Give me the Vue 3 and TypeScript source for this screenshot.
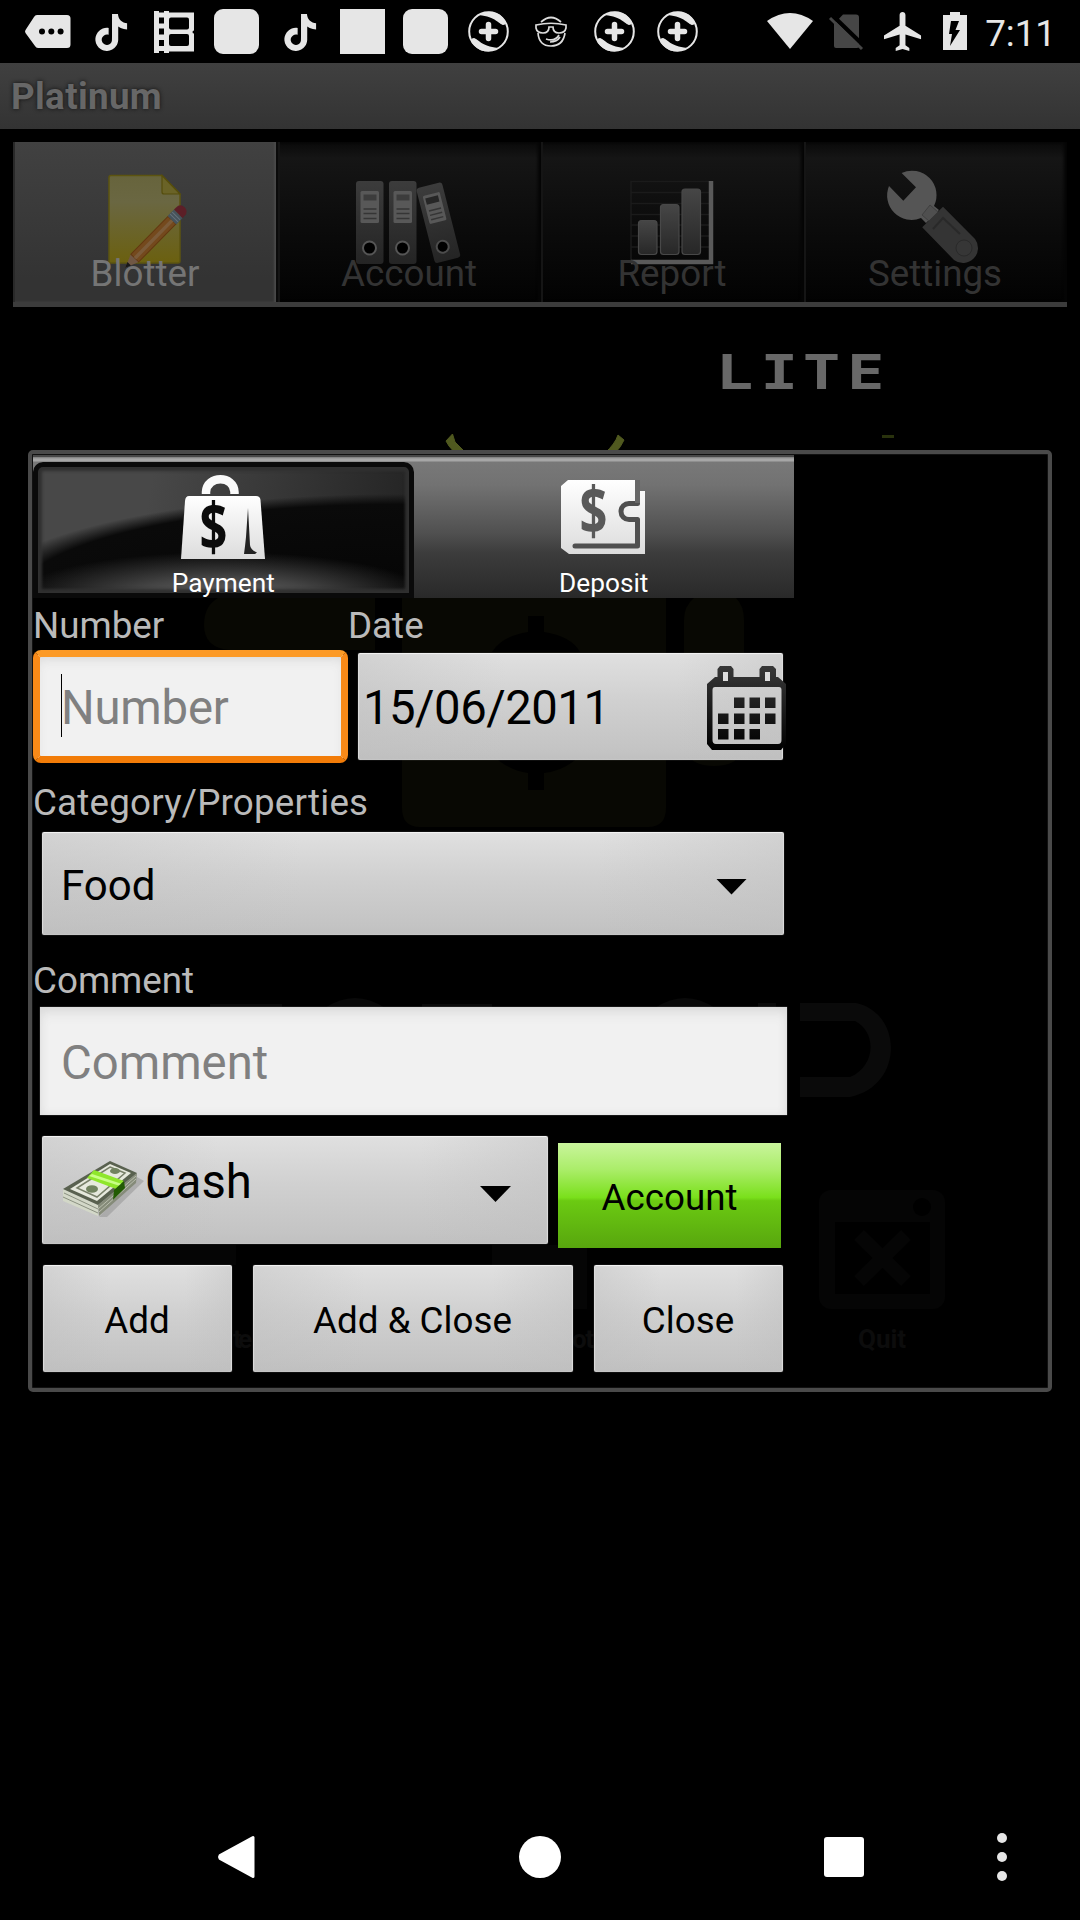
<script setup lang="ts">
type TabId = 'blotter' | 'account' | 'report' | 'settings'

interface Tab {
  id: TabId
  label: string
}

const notifications: string[] = [
  'message', 'tiktok', 'film', 'rounded', 'tiktok', 'square',
  'rounded', 'plus', 'face', 'plus', 'plus',
]

const tabs: Tab[] = [
  { id: 'blotter', label: 'Blotter' },
  { id: 'account', label: 'Account' },
  { id: 'report', label: 'Report' },
  { id: 'settings', label: 'Settings' },
]

const activeTab: TabId = 'blotter'

const calendarCells: [number, number][] = [
  [27, 31.5], [42.5, 31.5], [58, 31.5],
  [11, 47.5], [27, 47.5], [42.5, 47.5], [58, 47.5],
  [11, 63], [27, 63], [42.5, 63],
]
</script>

<template>
  <div class="screen">
    <header class="status">
      <div class="notes">
        <svg v-for="(n, i) in notifications" :key="i" width="63" height="63" viewBox="0 0 63 63" fill="#e6e6e6">
          <template v-if="n === 'message'">
            <path d="M20 15H51q3.500 0 3.500 3.500V44.500q0 3.500 -3.500 3.500H22q-2 0-3-2L9.500 33q-1-1.500 0-3L18 17q1-2 3-2z" />
            <g fill="#000"><circle cx="26" cy="31.500" r="3" /><circle cx="35.300" cy="31.500" r="3" /><circle cx="44.600" cy="31.500" r="3" /></g>
          </template>
          <path
            v-else-if="n === 'tiktok'"
            transform="translate(14 14) scale(1.52 1.54)"
            d="M12.525.02c1.31-.02 2.61-.01 3.91-.02.08 1.530.63 3.090 1.750 4.170 1.120 1.110 2.700 1.620 4.240 1.790v4.030c-1.440-.05-2.890-.35-4.200-.97-.57-.26-1.100-.59-1.620-.93-.01 2.920.01 5.840-.02 8.750-.08 1.400-.54 2.790-1.350 3.940-1.310 1.920-3.580 3.170-5.910 3.210-1.430.08-2.860-.31-4.080-1.030-2.020-1.190-3.440-3.370-3.650-5.710-.02-.5-.03-1-.01-1.490.18-1.900 1.120-3.720 2.580-4.960 1.660-1.440 3.980-2.130 6.150-1.720.02 1.480-.04 2.960-.04 4.440-.99-.32-2.150-.23-3.020.37-.63.41-1.110 1.040-1.360 1.750-.21.51-.15 1.070-.14 1.610.24 1.640 1.820 3.020 3.500 2.870 1.120-.01 2.190-.66 2.770-1.610.19-.33.4-.67.41-1.060.1-1.790.06-3.570.07-5.360.01-4.030-.01-8.050.02-12.070z"
          />
          <g v-else-if="n === 'film'">
            <path d="M12 11h40v42H12z" />
            <g fill="#000">
              <path d="M17 11h5v1.500h-5zM17 17.500h5v6h-5zM17 28.500h5v6h-5zM17 40h5v6h-5zM17 51h5v2h-5zM27 11h25v1.500H27zM27 51.500h25V53H27z" />
              <rect x="27" y="17.500" width="20" height="12" rx="2" />
              <rect x="27" y="34" width="20" height="12" rx="2" />
              <circle cx="52" cy="32" r="1.500" />
            </g>
          </g>
          <rect v-else-if="n === 'rounded'" x="9" y="9" width="45" height="45" rx="9" />
          <rect v-else-if="n === 'square'" x="9" y="9" width="45" height="45" />
          <g v-else-if="n === 'plus'">
            <circle cx="31.500" cy="31.500" r="19.300" fill="none" stroke="#e6e6e6" stroke-width="2" />
            <path d="M22 15C31 9 43 11 49 22Q49 25 46 25C42 24 39 17 22 15z" />
            <path d="M41 48C32 54 20 52 14 41Q14 38 17 38C21 39 24 46 41 48z" />
            <path d="M31.500 24.500v14M24.500 31.500h14" stroke="#e6e6e6" stroke-width="5.500" stroke-linecap="round" />
          </g>
          <g v-else fill="none" stroke="#dcdcdc" stroke-width="1.700">
            <path d="M21 22Q31 13 41 22M18 33q1 13 13 13t14-13" />
            <path d="M16 25q15-3.500 30 0v3q-1 5-7 5t-6-6h-4q0 6-6 6t-7-5z" />
            <path d="M26 39q9 3 13-4M30 42q7 0 10-5" />
          </g>
        </svg>
      </div>
      <div class="system">
        <svg width="46" height="63" viewBox="0 0 46 63"><path d="M0 21Q23 5 46 21L23 49z" fill="#e6e6e6" /></svg>
        <svg class="sim" width="36" height="63" viewBox="0 0 36 63">
          <path d="M14 14.500h13q3 0 3 3V46q0 2-2 2H7q-2 0-2-2V24z" fill="#464646" />
          <path d="M3 15L36 47" stroke="#000" stroke-width="4.500" />
          <path d="M1 18L33 49" stroke="#464646" stroke-width="3" />
        </svg>
        <svg class="plane" width="37" height="63" viewBox="0 0 37 63">
          <path transform="translate(-3.900 8.100) scale(1.950)" fill="#e6e6e6" d="M21 16v-2l-8-5V3.500c0-.83-.67-1.500-1.500-1.500S10 2.670 10 3.500V9l-8 5v2l8-2.500V19l-2 1.500V22l3.500-1 3.500 1v-1.500L13 19v-5.500l8 2.500z" />
        </svg>
        <svg class="battery" width="24" height="63" viewBox="0 0 24 63">
          <path d="M7 12h10v3h7v35H0V15h7z" fill="#e6e6e6" />
          <path d="M8 21h8l-3.500 9H17L7 46l2-12H6z" fill="#000" />
        </svg>
        <span class="clock">7:11</span>
      </div>
    </header>

    <div class="title">Platinum</div>

    <nav class="tabs">
      <div v-for="t in tabs" :key="t.id" class="tab" :class="{ active: t.id === activeTab }">
        <svg width="120" height="110" viewBox="0 0 120 110">
          <defs>
            <linearGradient id="paper" x1="0" y1="0" x2="0" y2="1">
              <stop offset="0" stop-color="#67643c" /><stop offset=".3" stop-color="#6a6742" /><stop offset="1" stop-color="#6b600f" />
            </linearGradient>
            <linearGradient id="binder" x1="0" y1="0" x2="0" y2="1">
              <stop offset="0" stop-color="#3c3c3c" /><stop offset="1" stop-color="#242424" />
            </linearGradient>
            <linearGradient id="bar" x1="0" y1="0" x2="0" y2="1">
              <stop offset="0" stop-color="#464646" /><stop offset="1" stop-color="#272727" />
            </linearGradient>
          </defs>
          <g v-if="t.id === 'blotter'">
            <path d="M26 15.500H77L95 34V101q0 2-2 2H26q-2 0-2-2V17.500q0-2 2-2z" fill="url(#paper)" stroke="#5c5410" stroke-width="1.500" />
            <path d="M77 15.500L95 34H79q-2 0-2-2z" fill="#6a6327" stroke="#554d0c" stroke-width="1.200" />
            <g transform="translate(40 108) rotate(-45.500)">
              <path d="M0 0L15-6V6z" fill="#705744" /><path d="M0 0L6-2.500V2.500z" fill="#181818" />
              <path d="M14-5.500H67V5.500H14z" fill="#74491d" stroke="#633710" /><path d="M14-1.500H67V2H14z" fill="#7b5b39" />
              <path d="M67-6h9v12h-9z" fill="#46535b" /><path d="M70-5.500v11M73-5.500v11" stroke="#65727a" />
              <path d="M76-6h3q6 0 6 6t-6 6h-3z" fill="#5c1f27" />
            </g>
          </g>
          <g v-else-if="t.id === 'account'">
            <g v-for="x in [7, 40]" :key="x" :transform="`translate(${x} 21)`">
              <rect width="27.500" height="83" rx="3" fill="url(#binder)" />
              <rect x="4.500" y="10" width="18.500" height="32" rx="1.500" fill="#585858" />
              <rect x="7.500" y="13.500" width="13" height="6" fill="#3c3c3c" />
              <path d="M7.500 28h13M7.500 32.500h13M7.500 37.500h13" stroke="#353535" stroke-width="1.500" />
              <circle cx="13.500" cy="67" r="6.500" fill="#000" stroke="#555" stroke-width="2" />
            </g>
            <g transform="translate(67 28.500) rotate(-14.300)">
              <rect width="26.500" height="77.500" rx="3" fill="url(#binder)" />
              <rect x="4.500" y="9" width="17.500" height="29" rx="1.500" fill="#585858" />
              <rect x="6.500" y="12" width="13" height="6.500" fill="#262626" />
              <path d="M7 25h12.500M7 29.500h12.500M7 34h12.500" stroke="#353535" stroke-width="1.500" />
              <circle cx="11.500" cy="63" r="6" fill="#000" stroke="#4c4c4c" stroke-width="2" />
            </g>
          </g>
          <g v-else-if="t.id === 'report'">
            <path d="M19 100V21.500H97M19 32.500H97M19 43.500H97M19 54.500H97M19 65H97M19 76H97M19 87H97" fill="none" stroke="#1b1b1b" stroke-width="1.500" />
            <path d="M99 21V102H19" fill="none" stroke="#5a5a5a" stroke-width="4.500" />
            <g fill="url(#bar)" stroke="#484848" stroke-width="1.200">
              <rect x="26.500" y="60.500" width="18.500" height="34" rx="3" />
              <rect x="48.500" y="44.500" width="18.500" height="50" rx="3" />
              <rect x="70" y="29" width="18.500" height="65.500" rx="3" />
            </g>
          </g>
          <g v-else>
            <path d="M26.600 13A24.500 24.500 0 0 1 59 46L64 50L51 63L46 58A24.500 24.500 0 0 1 14 26L28.300 40.700L41 27.300z" fill="#555" />
            <path d="M55 45l8 7-9 9-7-6z" fill="#4f4f4f" stroke="#404040" />
            <path d="M68 46.700L100 79A15 15 0 0 1 79 100L47.200 67.300z" fill="#343434" />
            <path d="M58 69L68 58L85 74" fill="none" stroke="#292929" stroke-width="2" />
            <circle cx="89" cy="88" r="8" fill="#363636" stroke="#2a2a2a" />
          </g>
        </svg>
        <span>{{ t.label }}</span>
      </div>
    </nav>
    <div class="tabline"></div>

    <svg class="wallpaper" width="1080" height="1480" viewBox="0 320 1080 1480">
      <g transform="translate(0 389) scale(1.3 1)">
        <text x="550.500 585 617.500 651.500" y="0" font-family="DejaVu Sans Mono, monospace" font-weight="700" font-size="48" fill="#686868">LITE</text>
      </g>
      <path d="M446 441L452.500 434L455 442L466 453H455L449 446z" fill="#50591f" stroke="#50591f" />
      <path d="M624 440L618 435Q615 444 605 453H615Q621 447 624 440z" fill="#50591f" stroke="#50591f" />
      <path d="M882 435h12v3h-12z" fill="#29320d" />
      <g fill="#080803">
        <path d="M230 598H375V650H230Q204 648 204 625Q204 606 218 598z" />
        <path d="M402 598H666V808Q666 827 648 827H420Q402 827 402 808z" />
        <path d="M694 598H736Q744 606 744 620V740Q744 766 714 766T684 740V620Q684 606 694 598z" />
      </g>
      <path d="M528 616h16v16q27 4 36 20h-88q10-16 36-20z" fill="#000" />
      <path d="M498 760Q512 771 528 773V790H544V773Q562 771 575 760z" fill="#000" />
      <g fill="#0a0a0a">
        <path d="M800 1003H856C903 1013 904 1086 850 1097H800V1077H850C876 1066 877 1032 855 1021H800z" />
        <path d="M210 1004h72v5h-72zM325 1008q30-20 60 0zM655 1008q30-20 60 0zM422 1004h70v5h-70zM758 1003h18v5h-18z" />
      </g>
      <g fill="#050505">
        <path d="M150 1245h86v20h-86zM492 1245h95v64h-95z" />
        <rect x="819" y="1190" width="126" height="119" rx="12" />
      </g>
      <rect x="835" y="1222" width="95" height="72" fill="#000" /><ellipse cx="922" cy="1207" rx="9" ry="9" fill="#000" />
      <path d="M859 1235L906 1281M906 1235L859 1281" stroke="#050505" stroke-width="14" />
      <g fill="#0c0c0c" font-family="Roboto, sans-serif" font-weight="700" font-size="26">
        <text x="858" y="1347.500">Quit</text>
        <text x="233" y="1347.500" textLength="19">te</text>
        <text x="572" y="1347.500" textLength="22">ot</text>
      </g>
    </svg>

    <main class="dialog">
      <div class="kinds">
        <div class="kind selected">
          <svg class="bag" width="84" height="84" viewBox="0 0 84 84">
            <defs>
              <linearGradient id="white" x1="0" y1="0" x2="0" y2="1">
                <stop offset="0" stop-color="#fff" /><stop offset="1" stop-color="#dcdcdc" />
              </linearGradient>
            </defs>
            <path d="M25 19V17C26 0 53 0 53.500 17V19" fill="none" stroke="#fafafa" stroke-width="8.500" />
            <path d="M8 21H75q4 0 4.500 4L84 84H0L4 26q.5-5 4-5z" fill="url(#white)" />
            <path d="M67 33L69 70Q69.500 75 76 77.500L74 79H63Q64 72 65 62z" fill="#222" />
            <text transform="translate(18.500 75.500) scale(.74 1)" font-family="Open Sans, sans-serif" font-weight="700" font-size="66" fill="#0b0b0b">$</text>
          </svg>
          <span>Payment</span>
        </div>
        <div class="kind">
          <svg class="wallet" width="84" height="74" viewBox="0 0 84 74">
            <path d="M7 0H74V11H84V74H8L0 68V6z" fill="url(#white)" />
            <path d="M76.500 8V23.500H68a8 8 0 0 0 0 16H76.500V66H14" fill="none" stroke="#505050" stroke-width="5" stroke-linejoin="round" stroke-linecap="round" />
            <path d="M74 0h5v23h-5z" fill="#686868" />
            <text transform="translate(18.500 55) scale(.74 1)" font-family="Open Sans, sans-serif" font-weight="700" font-size="66" fill="#595959">$</text>
          </svg>
          <span>Deposit</span>
        </div>
      </div>

      <div class="labels">
        <span class="caption number-caption">Number</span>
        <span class="caption">Date</span>
      </div>
      <div class="row">
        <div class="edit focused"><i class="caret"></i>Number</div>
        <div class="button date">
          <span>15/06/2011</span>
          <svg width="79" height="84" viewBox="0 0 79 84">
            <defs>
              <linearGradient id="ink" x1="0" y1="0" x2="0" y2="84" gradientUnits="userSpaceOnUse">
                <stop offset="0" stop-color="#383838" /><stop offset="1" stop-color="#000" />
              </linearGradient>
            </defs>
            <path fill="url(#ink)" fill-rule="evenodd" d="M8 11H71L79 18V78L74 84H5L0 78V18zM8 21Q5.500 21 5.500 24V74Q5.500 78 9 78H71Q74.500 78 74.500 74V24Q74.500 21 72 21z" />
            <path fill="url(#ink)" d="M13 0H24L26.500 3V15H10.500V3zM55 0H66L69 3V15H52.500V3z" />
            <path d="M16 6h5v9h-5zM58 6h5v9h-5z" fill="#ddd" />
            <rect v-for="([x, y], i) in calendarCells" :key="i" :x="x" :y="y" width="10.500" height="10.500" fill="url(#ink)" />
          </svg>
        </div>
      </div>

      <span class="caption category-caption">Category/Properties</span>
      <div class="button spinner category">
        <span>Food</span>
        <i class="arrow"></i>
      </div>

      <span class="caption comment-caption">Comment</span>
      <div class="edit comment">Comment</div>

      <div class="row account-row">
        <div class="button spinner cash">
          <svg width="86" height="60" viewBox="0 0 86 60">
            <path d="M38 57L76 17L83 21L46 57z" fill="#8a8a8a" opacity=".45" />
            <path d="M2 29L37 45V56L2 41z" fill="#d3d8c8" /><path d="M3 33l34 16M2 37l35 16" stroke="#8a9080" stroke-width="1" />
            <path d="M37 45L76 13L75 23L38 56z" fill="#858b79" /><path d="M38 52L75 19M37 49l38-33" stroke="#b9bead" />
            <path d="M49 1L76 13L37 45L2 29z" fill="#59614f" />
            <path d="M49 4L70 13L36 41L9 29z" fill="#e6e9dd" />
            <path d="M49 7L64 13L36 37L16 28z" fill="none" stroke="#788069" stroke-width="1.500" />
            <ellipse cx="31" cy="29" rx="6" ry="3.800" fill="#71835f" /><ellipse cx="54" cy="11" rx="5" ry="3" fill="#71835f" />
            <path d="M33 10L63 21L55 29L26 18z" fill="#8fe62b" /><path d="M31 14L61 24L59 26L28 16z" fill="#c8ff86" />
            <path d="M63 21L64 28L52 40L53 30z" fill="#225b03" />
          </svg>
          <span>Cash</span>
          <i class="arrow"></i>
        </div>
        <div class="green">Account</div>
      </div>

      <div class="row actions">
        <div class="button side">Add</div>
        <div class="button wide">Add &amp; Close</div>
        <div class="button side">Close</div>
      </div>
    </main>

    <footer class="navbar">
      <svg width="38" height="42" viewBox="0 0 38 42"><path d="M35 1.500V40.500L2 22.500Q1 21 2 19.500z" fill="#fff" stroke="#fff" stroke-width="3" stroke-linejoin="round" /></svg>
      <i class="home"></i>
      <i class="recent"></i>
      <div class="more"><i></i><i></i><i></i></div>
    </footer>
  </div>
</template>

<style>
body { background: #000; }
</style>

<style scoped>
.screen {
  position: relative;
  display: flex;
  flex-direction: column;
  width: 1080px;
  height: 1920px;
  overflow: hidden;
  background: #000;
  font-family: Roboto, sans-serif;
  font-size: 36.75px;
  line-height: 49px;
}
svg { display: block; flex: none; overflow: visible; }
.status {
  display: flex;
  justify-content: space-between;
  height: 63px;
  padding: 0 24px 0 16px;
}
.notes, .system { display: flex; }
.sim { margin-left: 16px; }
.plane { margin-left: 19px; }
.battery { margin-left: 22px; }
.clock {
  margin-left: 18px;
  padding-top: 9px;
  color: #e6e6e6;
}
.title {
  height: 66px;
  box-sizing: border-box;
  padding: 9px 11px 0;
  background: linear-gradient(#404040, #333);
  color: #676767;
  font-weight: 700;
  letter-spacing: .35px;
  text-shadow: 0 0 4px #111;
}
.tabs {
  display: flex;
  height: 160px;
  margin: 13px 13px 0;
}
.tab {
  display: flex;
  flex: 1;
  flex-direction: column;
  align-items: center;
  box-sizing: border-box;
  padding: 18px 1px 0 0;
  background: linear-gradient(#090909, #151515 10%, #0c0c0c 50%, #020202);
  box-shadow: inset 2px 0 0 #151515, inset -3px 0 3px #050505;
  color: #333;
}
.tab.active {
  padding: 18px 0 0 1px;
  border-right: 2px solid #0a0a0a;
  background: linear-gradient(#414141, #333 85%, #333);
  box-shadow: inset 2px 0 0 #292929, inset -2px 0 2px #4a4a4a;
  color: #757575;
}
.tab span { margin-top: -21px; }
.tabline {
  height: 5px;
  margin: 0 13px;
  background: #3c3c3c;
}
.wallpaper { position: absolute; top: 320px; left: 0; }
.dialog {
  position: absolute;
  top: 450px;
  left: 28px;
  display: flex;
  flex-direction: column;
  box-sizing: border-box;
  width: 1024px;
  height: 942px;
  padding: 1px;
  border: 4px solid #4a4a4a;
  border-radius: 5px;
  box-shadow: inset 0 0 0 1px #111;
}
.kinds {
  position: relative;
  display: flex;
  width: 761px;
  height: 143px;
  background: linear-gradient(#484848 0 2px, #7a7a7a 2px, #a6a6a6 4px 6px, #787878 7px, #727272 30px, #505050 78px, #3c3c3c 98px, #292929 143px);
}
.kind {
  display: flex;
  flex: 1;
  flex-direction: column;
  align-items: center;
  color: #fff;
  font-size: 26.25px;
  line-height: 32px;
}
.kind.selected {
  margin-top: 7px;
  border-radius: 10px 10px 0 0;
  background:
    radial-gradient(ellipse 210px 46px at 50% 100%, #686868, #444 45%, transparent),
    radial-gradient(ellipse 420px 104px at 95% 100%, #050505 0, #0a0a0a 90%, transparent 100%),
    linear-gradient(100deg, #484848 30%, #222),
    #222;
  box-shadow: inset 0 0 0 5px #0a0a0a, inset 0 0 3px 9px #303030;
}
.bag { margin-top: 13px; }
.kind.selected span { margin-top: 8px; }
.wallet { margin: 25px 1px 0 0; }
.kind:not(.selected) span { margin-top: 13px; }
.labels { display: flex; height: 49px; padding-top: 3px; }
.number-caption { width: 315px; }
.caption { color: #bababa; }
.row { display: flex; align-items: flex-start; }
.edit {
  position: relative;
  display: flex;
  align-items: center;
  box-sizing: border-box;
  background: #f1f1f1;
  box-shadow: inset 0 8px 14px -4px #d8d8d8, inset 0 0 8px #e0e0e0, 0 0 1px #888;
  color: #808080;
  font-size: 47.25px;
}
.focused {
  width: 315px;
  height: 113px;
  padding: 4px 0 0 21px;
  border: 7px solid;
  border-color: #fc9a26 #f98a18 #f27c08;
  border-radius: 8px;
  box-shadow: inset 0 6px 12px -4px #d8d8d8;
  letter-spacing: -.2px;
}
.caret {
  position: absolute;
  top: 17px;
  left: 21px;
  width: 1px;
  height: 63px;
  background: #000;
}
.button {
  display: flex;
  align-items: center;
  box-sizing: border-box;
  border-radius: 2px;
  background:
    linear-gradient(90deg, rgba(190, 190, 190, .4), transparent 35%, transparent 75%, rgba(190, 190, 190, .4)),
    linear-gradient(#e0e0e0, #d0d0d0 45%, #c4c4c4 90%, #c0c0c0);
  box-shadow: 0 0 1px #999, inset 0 2px 1px -1px #f4f4f4, inset -1px 0 1px #ddd, inset 1px 0 1px #ddd;
  color: #000;
}
.date {
  justify-content: space-between;
  width: 425px;
  height: 107px;
  margin: 3px 0 0 10px;
  padding-left: 5px;
  font-size: 47.25px;
  letter-spacing: -.5px;
}
.date span { padding-top: 3px; }
.date svg { margin: 2px -3px 0 0; }
.category-caption { height: 54px; padding-top: 15px; letter-spacing: .2px; }
.spinner { justify-content: space-between; }
.category {
  width: 742px;
  height: 103px;
  margin-left: 9px;
  padding: 4px 37px 0 19px;
  font-size: 42px;
}
.arrow {
  width: 31px;
  height: 16px;
  margin-top: 2px;
  background: #000;
  clip-path: polygon(0 0, 100% 0, 50% 100%);
}
.comment-caption { height: 51px; padding-top: 21px; }
.comment {
  width: 747px;
  height: 108px;
  margin-left: 7px;
  padding: 4px 0 0 21px;
}
.account-row { height: 112px; margin-top: 21px; }
.cash {
  width: 506px;
  height: 108px;
  margin-left: 9px;
  padding: 0 37px 0 19px;
  font-size: 47.25px;
}
.cash span { flex: 1; margin: -16px 0 0 -2px; }
.cash .arrow { margin-top: 8px; }
.green {
  width: 223px;
  height: 105px;
  margin: 7px 0 0 10px;
  background: linear-gradient(#c9f59c, #abed6a 25%, #7ae01b 52%, #6bca12 55%, #58a60e);
  color: #000;
  line-height: 109px;
  text-align: center;
}
.actions { margin-top: 17px; gap: 21px; }
.actions .button { justify-content: center; height: 107px; padding: 3px 1px 0 0; }
.side { width: 189px; }
.wide { width: 320px; }
.actions .button:first-child { margin-left: 10px; }
.navbar {
  display: flex;
  align-items: center;
  height: 126px;
  margin-top: auto;
  padding-left: 218px;
}
.home {
  width: 42px;
  height: 42px;
  margin-left: 263px;
  border-radius: 50%;
  background: #fff;
}
.recent {
  width: 40px;
  height: 40px;
  margin-left: 263px;
  border-radius: 3px;
  background: #fff;
}
.more {
  display: flex;
  flex-direction: column;
  gap: 9px;
  margin-left: 133px;
}
.more i {
  width: 10px;
  height: 10px;
  border-radius: 50%;
  background: #e6e6e6;
}
</style>
